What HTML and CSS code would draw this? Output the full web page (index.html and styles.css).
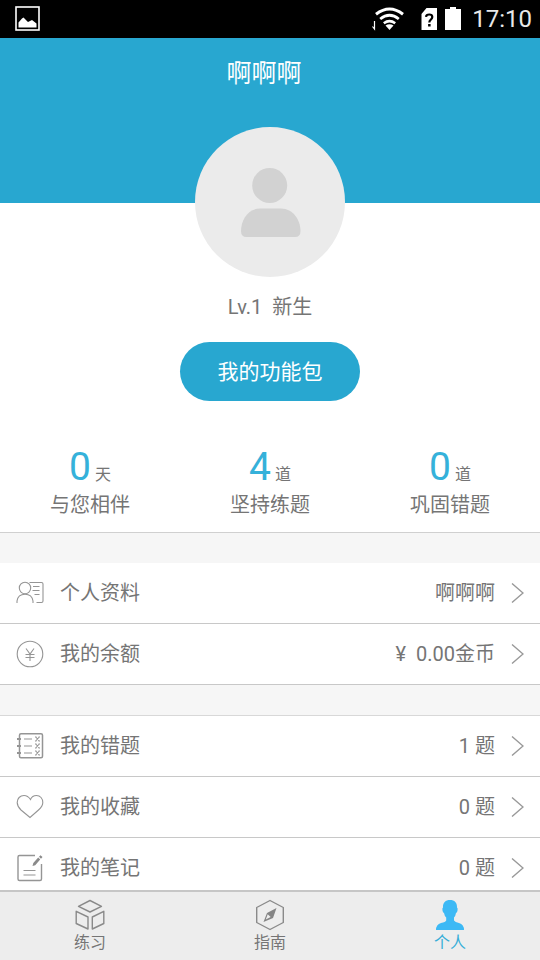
FILE: index.html
```html
<!DOCTYPE html>
<html lang="zh-CN">
<head>
<meta charset="utf-8">
<meta name="viewport" content="width=device-width, initial-scale=1">
<title>个人</title>
<link rel="stylesheet" href="styles.css">
</head>
<body>
<div class="status">
  <svg class="status-picture" width="26" height="26" viewBox="0 0 26 26"><rect x="1" y="1" width="23" height="23" fill="none" stroke="#fff" stroke-width="1.6"/><path d="M3.500 21.500V16.500L7 12.500L8.500 11.500L13 16L17 14L21.500 17.500V21.500Z" fill="#fff"/></svg>
  <svg width="34" height="24" viewBox="0 0 34 24"><g fill="none" stroke="#fff"><path d="M5 7.200Q18.500-3.200 32 7.200" stroke-width="3"/><path d="M9.200 12Q18.500 4.600 27.800 12" stroke-width="2.800"/><path d="M12.800 16.200Q18.500 12 24.200 16.200" stroke-width="2.600"/><path d="M3.500 14V22L1.500 19.500" stroke-width="1.200"/></g><path d="M14.500 18.500Q18.500 16 22.500 18.500L18.500 23Z" fill="#fff"/></svg>
  <svg class="status-sim" width="16" height="24" viewBox="0 0 16 24"><path d="M5.500 1H16V23H.5V7Z" fill="#fff"/><path d="M5 9.800Q5.300 7.500 8.300 7.500Q11.300 7.500 11.300 10Q11.300 11.400 9.800 12.600Q8.300 13.700 8.300 15.500" fill="none" stroke="#000" stroke-width="2.200"/><rect x="7.100" y="17" width="2.500" height="2.500"/></svg>
  <svg class="status-battery" width="16" height="24" viewBox="0 0 16 24"><path d="M5 0H11V2H16V23H0V2H5Z" fill="#fff"/></svg>
  <time class="clock">17:10</time>
</div>
<main class="content">
  <header class="banner">
    <h1 class="title">啊啊啊</h1>
  </header>
  <section class="profile">
    <svg class="avatar" width="150" height="150" viewBox="0 0 150 150"><circle cx="75" cy="75" r="75" fill="#ebebeb"/><circle cx="74.700" cy="58.500" r="17.500" fill="#d2d2d2"/><path d="M65 81.500H86C98 81.500 105.500 93 105.500 104Q105.500 110 100 110H51.500Q46 110 46 104C46 93 53 81.500 65 81.500Z" fill="#d2d2d2"/></svg>
    <p class="level">Lv.1&nbsp; 新生</p>
    <button class="pack" type="button">我的功能包</button>
    <dl class="stats">
      <div class="stat"><dt>与您相伴</dt><dd class="stat-value"><b class="stat-number">0</b>天</dd></div>
      <div class="stat"><dt>坚持练题</dt><dd class="stat-value"><b class="stat-number">4</b>道</dd></div>
      <div class="stat"><dt>巩固错题</dt><dd class="stat-value"><b class="stat-number">0</b>道</dd></div>
    </dl>
  </section>
  <nav class="menu" aria-label="账户">
    <a class="row" href="#profile">
      <svg class="icon" width="28" height="28" viewBox="0 0 28 28"><circle cx="9" cy="9" r="5.700"/><path d="M1 24V22Q2 15.200 9 15.200Q16 15.200 17 22V24M13.500 3.500H25.500Q27 3.500 27 5V22Q27 23.500 25.500 23.500H20.500M17 7.500H23.500M16.500 11.500H23.500M18.500 15.500H23.500"/></svg>
      <span>个人资料</span><span class="row-value">啊啊啊</span>
      <svg class="arrow" width="13" height="20" viewBox="0 0 13 20"><path d="M1 .5L12 10L1 19.500"/></svg>
    </a>
    <a class="row" href="#balance">
      <svg class="icon" width="28" height="28" viewBox="0 0 28 28"><circle cx="14" cy="14" r="12.800"/><path d="M10 8.500L14 14L18 8.500M14 14V21M9.500 14.500H18.500M9.500 17.500H18.500"/></svg>
      <span>我的余额</span><span class="row-value">¥ &nbsp;0.00金币</span>
      <svg class="arrow" width="13" height="20" viewBox="0 0 13 20"><path d="M1 .5L12 10L1 19.500"/></svg>
    </a>
  </nav>
  <nav class="menu menu-study" aria-label="学习">
    <a class="row" href="#mistakes">
      <svg class="icon" width="28" height="28" viewBox="0 0 28 28"><rect x="3.500" y="1.800" width="23" height="24" rx="1.500" stroke-width="1.500"/><path d="M1 7H5M1 14H5M1 21H5" stroke-width="2"/><path d="M8 7H16M8 14H16M8 21H16"/><path d="M19 5H20.500M22.500 5H24M19 9H20.500M22.500 9H24M19.800 5L23.200 9M23.200 5L19.800 9M19 12H20.500M22.500 12H24M19 16H20.500M22.500 16H24M19.800 12L23.200 16M23.200 12L19.800 16M19 19H20.500M22.500 19H24M19 23H20.500M22.500 23H24M19.800 19L23.200 23M23.200 19L19.800 23"/></svg>
      <span>我的错题</span><span class="row-value">1 题</span>
      <svg class="arrow" width="13" height="20" viewBox="0 0 13 20"><path d="M1 .5L12 10L1 19.500"/></svg>
    </a>
    <a class="row" href="#favorites">
      <svg class="icon" width="28" height="28" viewBox="0 0 28 28"><path d="M14.500 6.500C12.500 3.500 10.500 2.500 8 2.500C4 2.500 1.200 5.500 1.200 9.500C1.200 12.500 2.500 14.500 5 17L14 24.500L22.500 17C25.300 14.500 26.800 12.500 26.800 9.500C26.800 5.500 24.200 2.500 20.500 2.500C17.500 2.500 15.500 4 14.500 6.500Z"/></svg>
      <span>我的收藏</span><span class="row-value">0 题</span>
      <svg class="arrow" width="13" height="20" viewBox="0 0 13 20"><path d="M1 .5L12 10L1 19.500"/></svg>
    </a>
    <a class="row" href="#notes">
      <svg class="icon" width="28" height="28" viewBox="0 0 28 28"><path d="M19 1.500H3.500Q2 1.500 2 3V25Q2 26.500 3.500 26.500H24Q25.500 26.500 25.500 25V10" stroke-width="1.400"/><path d="M7.500 16.500H19.500M7.500 21H19.500"/><path d="M16.500 12L17.300 9L22.200 3.500L24.200 5.500L19.200 11.200ZM23 2.700L24.500 1.200L26.500 3L25 4.700Z" fill="#8a8a8a" stroke="none"/></svg>
      <span>我的笔记</span><span class="row-value">0 题</span>
      <svg class="arrow" width="13" height="20" viewBox="0 0 13 20"><path d="M1 .5L12 10L1 19.500"/></svg>
    </a>
  </nav>
</main>
<nav class="tabs" aria-label="主导航">
  <a class="tab" href="#practice">
    <svg width="30" height="32" viewBox="0 0 30 32" fill="none" stroke="#8a8a8a" stroke-width="1.400" stroke-linejoin="round"><path d="M15 1.500L26.500 7.300L15 13L3.500 7.300ZM1.200 12.300L13 18V30L1.200 24.500ZM28.800 12.300L17.300 18V30L28.800 24.500Z"/></svg>
    练习
  </a>
  <a class="tab" href="#guide">
    <svg width="30" height="32" viewBox="0 0 30 32"><path d="M15 1.500L28.300 8.500V23.500L15 30.500L1.700 23.500V8.500Z" fill="none" stroke="#8a8a8a" stroke-width="1.400" stroke-linejoin="round"/><path d="M21.500 9L18 19L8.500 23L12 14ZM12.700 15.200L10.800 20.500L15.700 18Z" fill="#858585" fill-rule="evenodd"/></svg>
    指南
  </a>
  <a class="tab tab-active" href="#me" aria-current="page">
    <svg width="30" height="32" viewBox="0 0 30 32"><path d="M15 1C19.500 1 22.200 3.500 22 8.500Q23 9 22.500 11.500Q22.200 13.500 21 14Q20.500 17 19 18.500V21.500Q20 23 24 24Q29 25.500 29 31H1Q1 25.500 6 24Q10.500 23 11.200 21.500V18.500Q9.500 17 9 14Q7.800 13.500 7.500 11.500Q7 9 8 8.500C7.800 3.500 10.500 1 15 1Z" fill="#3db9f5"/></svg>
    个人
  </a>
</nav>
</body>
</html>
```
FILE: styles.css
```css
* {
  box-sizing: border-box;
}

body {
  display: flex;
  flex-direction: column;
  height: 100vh;
  margin: 0;
  background: #fff;
  color: #757575;
  font: 20px/30px Roboto, "Noto Sans CJK SC", sans-serif;
}

h1,
p,
dl,
dd {
  margin: 0;
}

a {
  color: inherit;
  text-decoration: none;
}

svg {
  display: block;
  flex: none;
}

.status {
  display: flex;
  flex: none;
  align-items: center;
  height: 38px;
  padding: 0 8px 0 15px;
  background: #000;
  color: #e8e8e8;
}

.status-picture {
  margin-right: auto;
}

.status-sim {
  margin-left: 16px;
}

.status-battery {
  margin: 0 11px 0 8px;
}

.clock {
  font-size: 24px;
}

.content {
  flex: 1;
  min-height: 0;
  overflow: hidden;
  background: #f6f6f6;
}

.banner {
  height: 165px;
  padding: 18px 12px 0 0;
  background: #28a7d0;
  color: #fff;
  text-align: center;
}

.title {
  font-size: 25px;
  font-weight: 400;
  line-height: 36px;
}

.profile {
  display: flex;
  flex-direction: column;
  align-items: center;
  background: #fff;
  border-bottom: 1px solid #d0d0d0;
}

.avatar {
  margin-top: -76px;
}

.level {
  margin-top: 15px;
}

.pack {
  width: 180px;
  height: 59px;
  margin-top: 20px;
  padding: 0;
  border: 0;
  border-radius: 30px;
  background: #28a7d0;
  color: #fff;
  font: inherit;
  font-size: 21px;
}

.stats {
  display: flex;
  align-self: stretch;
  margin-top: 44px;
  padding-bottom: 12px;
}

.stat {
  display: flex;
  flex: 1;
  flex-direction: column-reverse;
  align-items: center;
}

.stat-value {
  font-size: 16px;
  line-height: 20px;
}

.stat-number {
  margin-right: 4px;
  color: #35b1da;
  font-size: 39px;
  font-weight: 400;
  line-height: 45px;
}

.menu {
  margin-top: 30px;
}

.menu-study {
  border-top: 1px solid #d8d8d8;
}

.row {
  display: flex;
  align-items: center;
  height: 61px;
  padding: 0 16px;
  background: #fff;
  border-bottom: 1px solid #c8c8c8;
}

.icon {
  margin-right: 16px;
  fill: none;
  stroke: #959595;
  stroke-width: 1.1;
}

.row-value {
  margin-left: auto;
}

.arrow {
  margin-left: 16px;
  fill: none;
  stroke: #999;
  stroke-width: 1.4;
}

.tabs {
  display: flex;
  flex: none;
  height: 70px;
  padding-top: 7px;
  background: #ededed;
  border-top: 2px solid #c6c6c6;
  font-size: 16px;
  line-height: 24px;
}

.tab {
  display: flex;
  flex: 1;
  flex-direction: column;
  align-items: center;
}

.tab-active {
  color: #35aed8;
}
```
